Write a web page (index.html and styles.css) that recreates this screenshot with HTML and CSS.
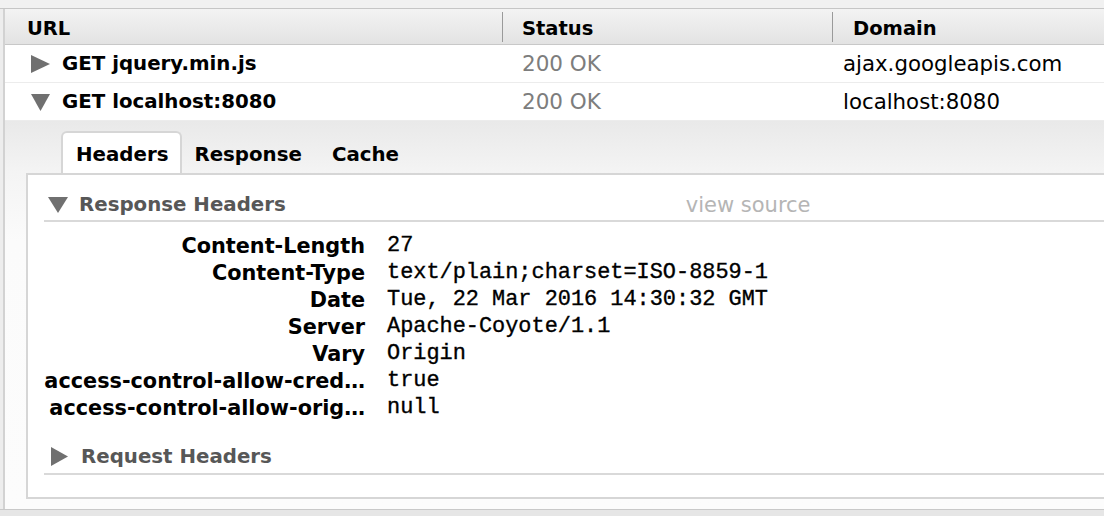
FILE: index.html
```html
<!DOCTYPE html>
<html>
<head>
<meta charset="utf-8">
<link rel="stylesheet" href="styles.css">
</head>
<body>
<div class="page">
  <div class="topstrip"></div>
  <div class="table">
    <div class="row head">
      <div class="cell c-url">URL</div>
      <div class="cell c-status">Status</div>
      <div class="cell c-domain">Domain</div>
    </div>
    <div class="row item">
      <div class="cell c-url">
        <svg class="tri" width="20" height="20" viewBox="0 0 20 20"><polygon points="0,1 19,10 0,19" fill="#707070"/></svg>
        <span class="name">GET jquery.min.js</span>
      </div>
      <div class="cell c-status st">200 OK</div>
      <div class="cell c-domain dm">ajax.googleapis.com</div>
    </div>
    <div class="row item">
      <div class="cell c-url">
        <svg class="tri" width="20" height="20" viewBox="0 0 20 20"><polygon points="0,2 19,2 9.5,19" fill="#707070"/></svg>
        <span class="name">GET localhost:8080</span>
      </div>
      <div class="cell c-status st">200 OK</div>
      <div class="cell c-domain dm">localhost:8080</div>
    </div>
    <div class="detail">
      <div class="tabs">
        <div class="tab active">Headers</div>
        <div class="tab">Response</div>
        <div class="tab">Cache</div>
      </div>
      <div class="box">
        <div class="section-head">
          <svg class="stri" width="20" height="18" viewBox="0 0 20 18"><polygon points="0,1 20,1 10,17" fill="#707070"/></svg>
          <span class="section-title">Response Headers</span>
          <span class="viewsrc">view source</span>
        </div>
        <div class="hdrs">
          <div class="hk">Content-Length</div><div class="hv">27</div>
          <div class="hk">Content-Type</div><div class="hv">text/plain;charset=ISO-8859-1</div>
          <div class="hk">Date</div><div class="hv">Tue, 22 Mar 2016 14:30:32 GMT</div>
          <div class="hk">Server</div><div class="hv">Apache-Coyote/1.1</div>
          <div class="hk">Vary</div><div class="hv">Origin</div>
          <div class="hk">access-control-allow-cred…</div><div class="hv">true</div>
          <div class="hk">access-control-allow-orig…</div><div class="hv">null</div>
        </div>
        <div class="section-head req">
          <svg class="stri" width="20" height="20" viewBox="0 0 20 20"><polygon points="1,0 18,9.5 1,19" fill="#707070"/></svg>
          <span class="section-title">Request Headers</span>
        </div>
      </div>
    </div>
  </div>
  <div class="bottom"></div>
</div>
</body>
</html>
```
FILE: styles.css
```css
html, body {
  margin: 0;
  padding: 0;
}
body {
  width: 1104px;
  height: 516px;
  overflow: hidden;
  background: #ededed;
  font-family: "DejaVu Sans", "Liberation Sans", sans-serif;
  color: #000;
}
.page {
  display: flex;
  flex-direction: column;
  height: 516px;
}
.topstrip {
  height: 8px;
  background: #f1f1f1;
  border-bottom: 1px solid #c6c6c6;
}
.table {
  margin-left: 3px;
  border-left: 2px solid #d2d2d2;
  display: flex;
  flex-direction: column;
  flex: 0 0 auto;
  background: #fff;
}
.row {
  display: grid;
  grid-template-columns: 497px 330px 1fr;
  align-items: center;
}
.head {
  height: 35px;
  background: linear-gradient(#f3f3f3, #e3e3e3);
  border-bottom: 1px solid #c8c8c8;
  font-weight: bold;
  font-size: 19.5px;
}
.head .cell {
  height: 100%;
  display: flex;
  align-items: center;
  padding-top: 3px;
  box-sizing: border-box;
}
.head .c-url { padding-left: 22px; }
.head .c-status {
  padding-left: 19px;
  border-left: 1px solid #9a9a9a;
  height: 30px;
}
.head .c-domain {
  padding-left: 20px;
  border-left: 1px solid #9a9a9a;
  height: 30px;
}
.item {
  height: 37px;
  border-bottom: 1px solid #ececec;
  font-size: 21.5px;
}
.item .c-url {
  display: flex;
  align-items: center;
  padding-left: 26px;
}
.tri { flex: 0 0 auto; }
.name {
  font-weight: bold;
  margin-left: 11px;
  font-size: 19.8px;
}
.st {
  color: #7d7d7d;
  padding-left: 20px;
}
.dm {
  padding-left: 11px;
  font-size: 21.3px;
}
.detail {
  height: 388px;
  box-sizing: border-box;
  padding: 10px 0 0 21px;
  background: linear-gradient(#e9e9e9 0, #f4f4f4 52px, #fbfbfb 120px, #fcfcfc 100%);
  display: flex;
  flex-direction: column;
}
.tabs {
  display: flex;
  padding-left: 35px;
  height: 42px;
  position: relative;
  z-index: 1;
}
.tab {
  font-weight: bold;
  font-size: 19.8px;
  display: flex;
  align-items: center;
  padding: 2px 12px 0 13px;
  border: 2px solid transparent;
  border-bottom: none;
  border-radius: 6px 6px 0 0;
}
.tab.active {
  background: #fff;
  border-color: #d6d6d6;
  height: 42px;
  box-sizing: border-box;
  margin-bottom: -2px;
}
.tab + .tab { padding-left: 10px; padding-right: 16px; }
.box {
  border: 2px solid #d6d6d6;
  border-right: none;
  background: #fff;
  height: 326px;
  box-sizing: border-box;
  padding-left: 16px;
}
.section-head {
  display: flex;
  align-items: center;
  height: 47px;
  border-bottom: 2px solid #d9d9d9;
  padding-left: 4px;
  padding-top: 14px;
  box-sizing: border-box;
}
.stri { flex: 0 0 auto; }
.section-title {
  color: #575757;
  font-weight: bold;
  font-size: 19.8px;
  margin-left: 11px;
}
.viewsrc {
  color: #b5b5b5;
  font-size: 21px;
  margin-left: 400px;
}
.hdrs {
  display: grid;
  grid-template-columns: 321px 1fr;
  column-gap: 22px;
  padding-top: 10px;
  grid-auto-rows: 27px;
  align-items: center;
}
.hk {
  text-align: right;
  font-weight: bold;
  font-size: 20.8px;
  white-space: nowrap;
}
.hv {
  font-family: "Liberation Mono", "DejaVu Sans Mono", monospace;
  font-size: 21.9px;
  -webkit-text-stroke: 0.35px #000;
}
.req {
  height: 54px;
  padding-left: 6px;
  padding-top: 19px;
}
.bottom {
  flex: 1;
  border-top: 1px solid #c9c9c9;
  background: #e6e6e6;
}
```
